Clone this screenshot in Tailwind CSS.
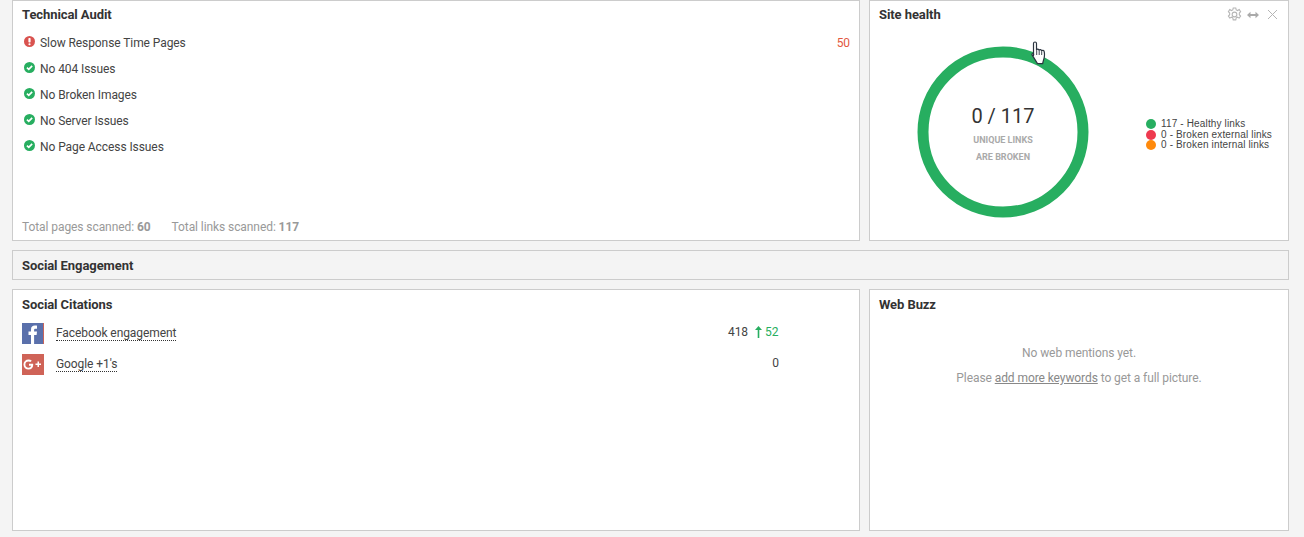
<!DOCTYPE html>
<html lang="en">
<head>
  <meta charset="UTF-8" />
  <title>Dashboard</title>
  <script src="https://cdn.jsdelivr.net/npm/@tailwindcss/browser@4"></script>
</head>
<body class="bg-[#f4f4f4] font-['Roboto',sans-serif] text-[12px] tracking-[-0.08px] text-[#444] h-[537px] overflow-hidden relative">
  <div class="pl-3 pr-[15px] flex flex-col gap-[9px]">

    <!-- Top row -->
    <div class="grid grid-cols-[848px_420px] gap-[9px]">
      <!-- Technical Audit -->
      <section class="bg-white border border-[#ccc] h-[241px] px-[9px] pt-[6px] flex flex-col">
        <h2 class="text-[13px] leading-[16px] font-bold text-[#333]">Technical Audit</h2>
        <ul class="mt-[7px] flex flex-col">
          <li class="flex items-center h-[26px]">
            <svg class="w-[11px] h-[11px] ml-[2px] mr-[5px] mt-[-3px]" viewBox="0 0 12 12"><circle cx="6" cy="6" r="6" fill="#d9534f"/><rect x="4.8" y="2.2" width="2.4" height="5" rx="0.8" fill="#fff"/><circle cx="6" cy="9" r="1.2" fill="#fff"/></svg>
            <span>Slow Response Time Pages</span>
            <span class="ml-auto text-[#e2583e]">50</span>
          </li>
          <li class="flex items-center h-[26px]">
            <svg class="w-[11px] h-[11px] ml-[2px] mr-[5px] mt-[-3px]" viewBox="0 0 12 12"><circle cx="6" cy="6" r="6" fill="#27ae60"/><path d="M3.2 6.2 5.2 8.1 8.9 4.3" fill="none" stroke="#fff" stroke-width="1.8"/></svg>
            <span>No 404 Issues</span>
          </li>
          <li class="flex items-center h-[26px]">
            <svg class="w-[11px] h-[11px] ml-[2px] mr-[5px] mt-[-3px]" viewBox="0 0 12 12"><circle cx="6" cy="6" r="6" fill="#27ae60"/><path d="M3.2 6.2 5.2 8.1 8.9 4.3" fill="none" stroke="#fff" stroke-width="1.8"/></svg>
            <span>No Broken Images</span>
          </li>
          <li class="flex items-center h-[26px]">
            <svg class="w-[11px] h-[11px] ml-[2px] mr-[5px] mt-[-3px]" viewBox="0 0 12 12"><circle cx="6" cy="6" r="6" fill="#27ae60"/><path d="M3.2 6.2 5.2 8.1 8.9 4.3" fill="none" stroke="#fff" stroke-width="1.8"/></svg>
            <span>No Server Issues</span>
          </li>
          <li class="flex items-center h-[26px]">
            <svg class="w-[11px] h-[11px] ml-[2px] mr-[5px] mt-[-3px]" viewBox="0 0 12 12"><circle cx="6" cy="6" r="6" fill="#27ae60"/><path d="M3.2 6.2 5.2 8.1 8.9 4.3" fill="none" stroke="#fff" stroke-width="1.8"/></svg>
            <span>No Page Access Issues</span>
          </li>
        </ul>
        <p class="mt-auto mb-[5px] leading-[16px] text-[#999] flex gap-[21px]">
          <span>Total pages scanned: <b>60</b></span>
          <span>Total links scanned: <b>117</b></span>
        </p>
      </section>

      <!-- Site health -->
      <section class="bg-white border border-[#ccc] h-[241px] px-[9px] pt-[6px] relative">
        <h2 class="text-[13px] leading-[16px] font-bold text-[#333]">Site health</h2>
        <div class="absolute top-[6px] right-[10px] flex items-center gap-[5px] text-[#b5b5b5]">
          <svg class="w-[15px] h-[15px]" viewBox="0 0 14 14" fill="none" stroke="#b5b5b5" stroke-width="1"><path d="M5.8 1h2.4l.4 1.7 1.300.6 1.500-.9 1.300 2-1.200 1.200v1.600l1.200 1.200-1.300 2-1.500-.9-1.300.6-.4 1.900H5.800l-.4-1.900-1.300-.6-1.500.9-1.300-2 1.200-1.200V5.600L1.300 4.400l1.300-2 1.500.9 1.300-.6z"/><circle cx="7" cy="7" r="2.2"/></svg>
          <svg class="w-[12px] h-[10px] mr-[1px]" viewBox="0 0 12 10"><path d="M0 5 3.500 1.800V4h5V1.800L12 5 8.500 8.200V6h-5v2.200z" fill="#aaa"/></svg>
          <svg class="w-[11px] h-[11px] ml-[2px]" viewBox="0 0 11 11" fill="none" stroke="#b5b5b5" stroke-width="1"><path d="M1 1 10 10M10 1 1 10"/></svg>
        </div>
        <div class="flex">
          <div class="relative w-[172px] h-[172px] ml-[38px] mt-[23px] shrink-0">
            <svg class="w-full h-full" viewBox="0 0 172 172"><circle cx="86" cy="86" r="80" fill="none" stroke="#27ae60" stroke-width="11"/></svg>
            <div class="absolute inset-0 flex flex-col items-center justify-center pt-[4px]">
              <div class="text-[20px] leading-[26px] text-[#333] tracking-normal">0 / 117</div>
              <div class="mt-[3px] text-[9px] leading-[17px] font-bold text-[#aaa] text-center tracking-normal">UNIQUE LINKS<br>ARE BROKEN</div>
            </div>
          </div>
          <ul class="ml-[57px] mt-[96px] font-['Liberation_Sans',sans-serif] text-[10px] tracking-[0.15px] text-[#444] leading-[10.5px] whitespace-nowrap">
            <li class="flex items-center gap-[5px]"><span class="w-[10px] h-[10px] rounded-full bg-[#27ae60]"></span>117 - Healthy links</li>
            <li class="flex items-center gap-[5px]"><span class="w-[10px] h-[10px] rounded-full bg-[#ee3a4f]"></span>0 - Broken external links</li>
            <li class="flex items-center gap-[5px]"><span class="w-[10px] h-[10px] rounded-full bg-[#ff8a0c]"></span>0 - Broken internal links</li>
          </ul>
        </div>
      </section>
    </div>

    <!-- Social Engagement -->
    <section class="border border-[#ccc] h-[30px] px-[9px] pt-[2px] flex items-center">
      <h2 class="text-[13px] font-bold text-[#333]">Social Engagement</h2>
    </section>

    <!-- Bottom row -->
    <div class="grid grid-cols-[848px_420px] gap-[9px]">
      <section class="bg-white border border-[#ccc] h-[242px] px-[9px] pt-[7px]">
        <h2 class="text-[13px] leading-[16px] font-bold text-[#333]">Social Citations</h2>
        <div class="mt-[10px] flex items-center h-[21px]">
          <svg class="w-[22px] h-[21px] mr-[12px]" viewBox="0 0 22 21"><rect width="22" height="21" fill="#5a70ab"/><rect x="21" width="1" height="21" fill="#c8645a"/><path d="M9 21V12H6.500V8.600H9V6.400C9 3.800 10.600 2.600 12.800 2.600c1 0 1.900.1 2.200.1v3h-1.500c-1.200 0-1.400.6-1.400 1.400v1.500h2.900l-.4 3.400H12.100V21z" fill="#fff"/></svg>
          <span class="border-b border-dotted border-[#333] leading-[14px]">Facebook engagement</span>
          <span class="ml-auto w-[50px] text-right mr-[1px] mb-[4px]">418</span>
          <svg class="w-[7px] h-[12px] ml-[6px] mr-[3px] mb-[4px]" viewBox="0 0 7 12"><path d="M3.500 0 7 4H4.300V12H2.700V4H0z" fill="#27ae60"/></svg>
          <span class="text-[#27ae60] w-[13px] mr-[72px] mb-[4px]">52</span>
        </div>
        <div class="mt-[10px] flex items-center h-[21px]">
          <svg class="w-[22px] h-[21px] mr-[12px]" viewBox="0 0 22 21"><rect width="22" height="21" fill="#cf6357"/><path d="M10.500 9.800v1.900h2.100c-.3 1.300-1.300 2-2.600 2a3.100 3.100 0 0 1 0-6.300c.8 0 1.400.3 1.900.7l1.400-1.400A5 5 0 0 0 10 5.600a5 5 0 1 0 0 10c2.900 0 4.700-2 4.700-4.800 0-.3 0-.7-.1-1z" fill="#fff" transform="translate(-3.500 0)"/><path d="M13.500 9.500h2V7.500h1.500v2h2v1.500h-2v2h-1.500v-2h-2z" fill="#fff"/></svg>
          <span class="border-b border-dotted border-[#333] leading-[14px]">Google +1's</span>
          <span class="ml-auto mr-[71px] mb-[4px] text-[#444]">0</span>
        </div>
      </section>

      <section class="bg-white border border-[#ccc] h-[242px] px-[9px] pt-[7px]">
        <h2 class="text-[13px] leading-[16px] font-bold text-[#333]">Web Buzz</h2>
        <div class="mt-[32px] text-center text-[#999] leading-[16px]">
          <p>No web mentions yet.</p>
          <p class="mt-[9px]">Please <a class="underline text-[#888]">add more keywords</a> to get a full picture.</p>
        </div>
      </section>
    </div>
  </div>

  <!-- mouse pointer -->
  <svg class="absolute left-[1031px] top-[41px] w-[16px] h-[26px]" viewBox="0 0 16 26"><path d="M2.500 2.500c0-2 3-2 3 0V9c.5-1.200 2.300-1 2.600.3.600-1 2.200-.8 2.500.5.700-.8 2.300-.5 2.600.8.400 2 .4 4 0 6-.3 1.500-1 3-1.500 6H6.500c-1-1.500-3-5-5.300-8.500-.7-1.200.8-2.300 1.500-1l-.2 1.400z" fill="#fff" stroke="#2b3440" stroke-width="1.200" stroke-linejoin="round"/><path d="M5.700 9.500v4.500M8.200 9.800v4.200M10.700 10.300v3.700" stroke="#2b3440" stroke-width="0.900"/></svg>
</body>
</html>
